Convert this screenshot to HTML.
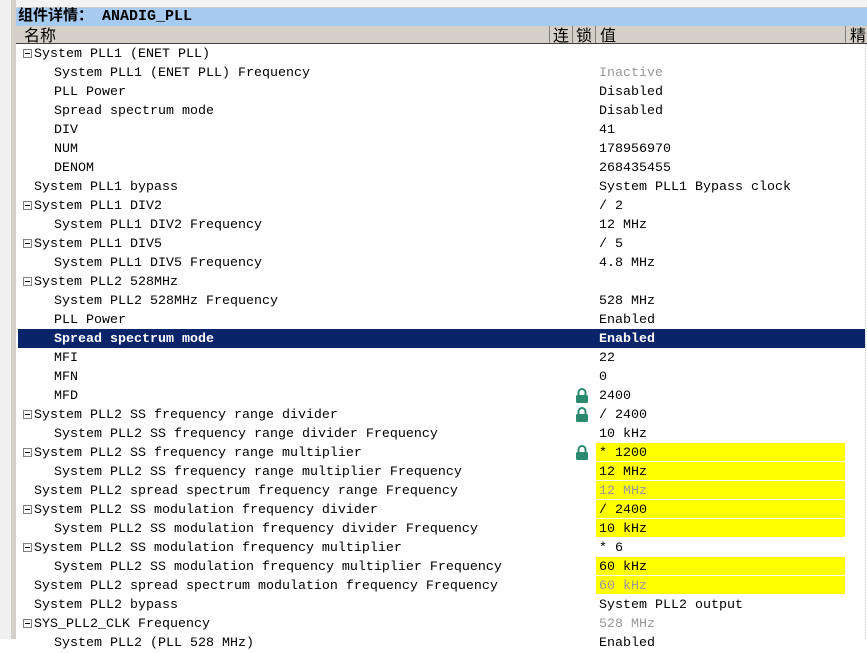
<!DOCTYPE html>
<html><head><meta charset="utf-8"><style>
*{margin:0;padding:0;box-sizing:border-box}
body{width:867px;height:639px;overflow:hidden;background:#fff;position:relative;font-family:"Liberation Mono","Noto Sans CJK SC",monospace;font-size:13.33px;color:#000}
.a{position:absolute}
.r{position:absolute;left:18px;width:847px;height:19px;line-height:19px;white-space:pre}
.n{position:absolute;top:1px}
.v{position:absolute;left:581px;top:1px}
.y{position:absolute;left:578px;top:0;width:249px;height:18px;background:#ffff00}
.g{color:#999}
.t{position:absolute;left:5px;top:5px;width:9px;height:9px;border:1px solid #808080;background:#fff}
.t:after{content:"";position:absolute;left:1px;top:3px;width:5px;height:1px;background:#000}
.lk{position:absolute;left:557px;top:2px;width:14px;height:15px}
.sel{background:#0a246a;color:#fff;font-weight:bold}
</style></head><body>
<div class="a" style="left:0;top:0;width:11px;height:639px;background:#f0f0f0"></div>
<div class="a" style="left:11px;top:0;width:5px;height:639px;background:#d4d0c8"></div>
<div class="a" style="left:16px;top:0;width:851px;height:8px;background:#f4f4f4;border-bottom:1px solid #ccc"></div>
<div class="a" style="left:16px;top:8px;width:851px;height:18px;background:#a6caf0;font-weight:bold;font-size:15px;line-height:18px;padding-left:2px;font-family:'Liberation Mono','Noto Sans CJK SC',monospace">组件详情：  ANADIG_PLL</div>
<div class="a" style="left:16px;top:26px;width:851px;height:18px;background:#d4d0c8;border-bottom:1px solid #404040;font-size:16px;line-height:17px;font-family:'Noto Sans CJK SC',sans-serif">
<span class="a" style="left:8px">名称</span>
<span class="a" style="left:533px;top:0;width:1px;height:17px;background:#808080"></span>
<span class="a" style="left:537px">连</span>
<span class="a" style="left:556px;top:0;width:1px;height:17px;background:#808080"></span>
<span class="a" style="left:560px">锁</span>
<span class="a" style="left:579px;top:0;width:1px;height:17px;background:#808080"></span>
<span class="a" style="left:584px">值</span>
<span class="a" style="left:829px;top:0;width:1px;height:17px;background:#808080"></span>
<span class="a" style="left:834px">精</span>
</div>
<div class="a" style="left:865px;top:44px;width:1px;height:595px;border-left:1px dotted #ccc"></div>
<div id="rows"></div>
<svg width="0" height="0" style="position:absolute"><defs><symbol id="L" viewBox="0 0 14 15"><path d="M3.5 7V4.5a3.5 3.5 0 0 1 7 0V7" fill="none" stroke="#2a8a70" stroke-width="2"/><rect x="1" y="7" width="12" height="8" rx="1.5" fill="#2a8a70"/></symbol></defs></svg>
<script>
var R=[
[2,"System PLL1 (ENET PLL)",""],
[1,"System PLL1 (ENET PLL) Frequency","Inactive","g"],
[1,"PLL Power","Disabled"],
[1,"Spread spectrum mode","Disabled"],
[1,"DIV","41"],
[1,"NUM","178956970"],
[1,"DENOM","268435455"],
[0,"System PLL1 bypass","System PLL1 Bypass clock"],
[2,"System PLL1 DIV2","/ 2"],
[1,"System PLL1 DIV2 Frequency","12 MHz"],
[2,"System PLL1 DIV5","/ 5"],
[1,"System PLL1 DIV5 Frequency","4.8 MHz"],
[2,"System PLL2 528MHz",""],
[1,"System PLL2 528MHz Frequency","528 MHz"],
[1,"PLL Power","Enabled"],
[1,"Spread spectrum mode","Enabled","s"],
[1,"MFI","22"],
[1,"MFN","0"],
[1,"MFD","2400","l"],
[2,"System PLL2 SS frequency range divider","/ 2400","l"],
[1,"System PLL2 SS frequency range divider Frequency","10 kHz"],
[2,"System PLL2 SS frequency range multiplier","* 1200","ly"],
[1,"System PLL2 SS frequency range multiplier Frequency","12 MHz","y"],
[0,"System PLL2 spread spectrum frequency range Frequency","12 MHz","yg"],
[2,"System PLL2 SS modulation frequency divider","/ 2400","y"],
[1,"System PLL2 SS modulation frequency divider Frequency","10 kHz","y"],
[2,"System PLL2 SS modulation frequency multiplier","* 6"],
[1,"System PLL2 SS modulation frequency multiplier Frequency","60 kHz","y"],
[0,"System PLL2 spread spectrum modulation frequency Frequency","60 kHz","yg"],
[0,"System PLL2 bypass","System PLL2 output"],
[2,"SYS_PLL2_CLK Frequency","528 MHz","g"],
[1,"System PLL2 (PLL 528 MHz)","Enabled"]];
var h="";
R.forEach(function(r,i){var f=r[3]||"";var top=44+19*i;
h+='<div class="r'+(f.indexOf("s")>=0?' sel':'')+'" style="top:'+top+'px">';
if(f.indexOf("y")>=0)h+='<div class="y"></div>';
if(r[0]==2)h+='<div class="t"></div>';
h+='<span class="n" style="left:'+(r[0]==1?36:16)+'px">'+r[1]+'</span>';
if(f.indexOf("l")>=0)h+='<svg class="lk"><use href="#L"/></svg>';
h+='<span class="v'+(f.indexOf("g")>=0?' g':'')+'">'+r[2]+'</span></div>';});
document.getElementById("rows").innerHTML=h;
</script>
</body></html>
